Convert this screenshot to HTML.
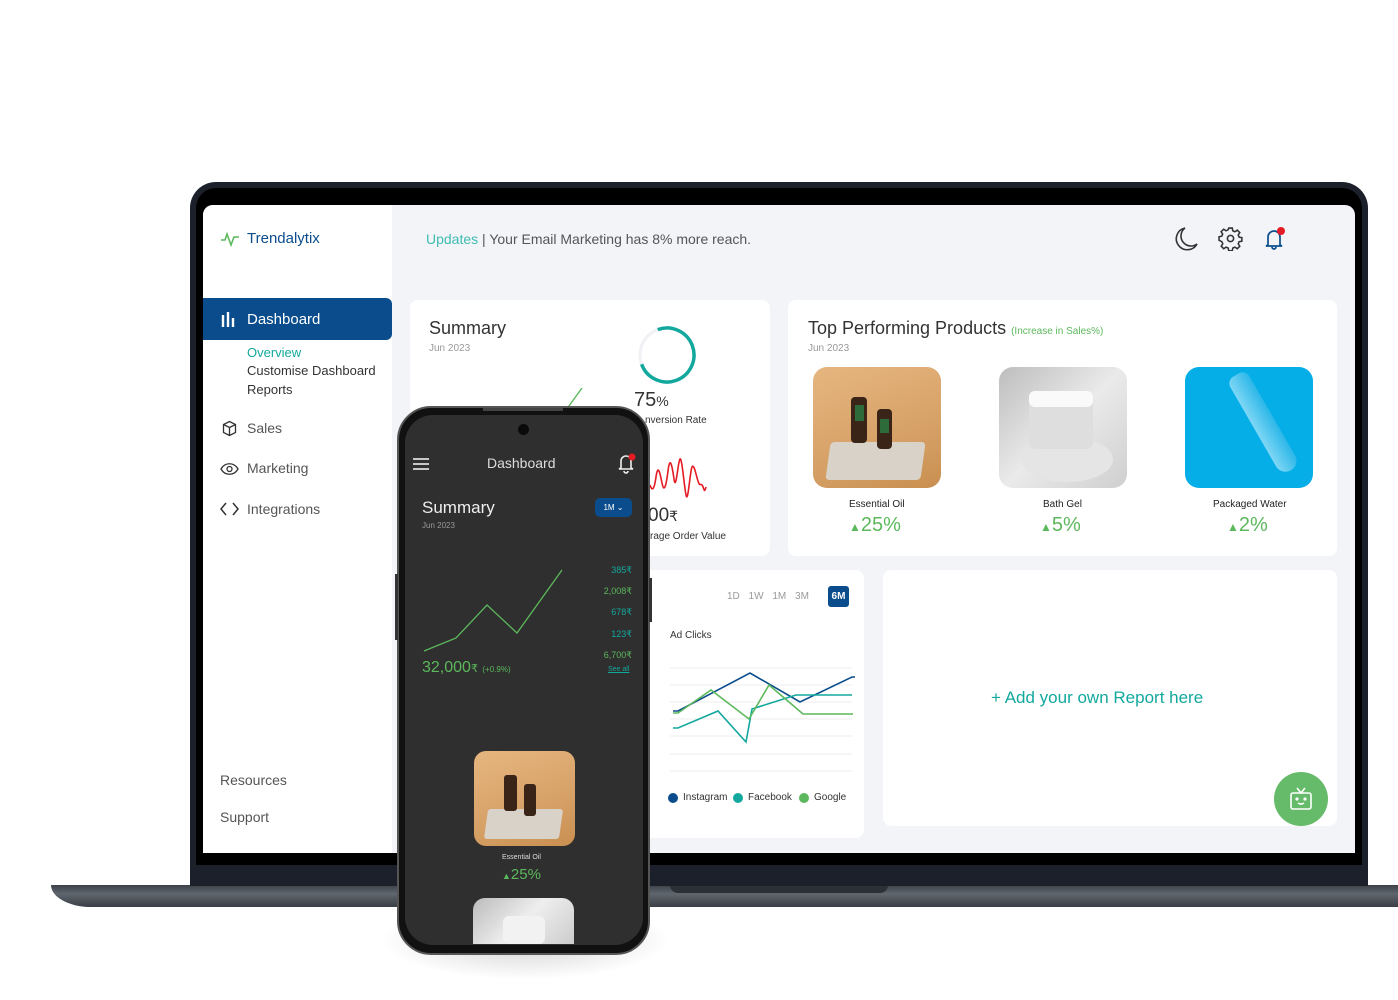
<!DOCTYPE html>
<html><head><meta charset="utf-8"><style>
*{margin:0;padding:0;box-sizing:border-box}
body{width:1398px;height:1000px;background:#fff;position:relative;overflow:hidden;font-family:"Liberation Sans",sans-serif;color:#333}
.a{position:absolute}
.card{position:absolute;background:#fff;border-radius:8px}
.t{position:absolute;white-space:nowrap}
</style></head><body>
<div class="a" style="left:51px;top:885px;width:1347px;height:22px;background:linear-gradient(#3c4148,#5f666d 40%,#3a3f46);border-radius:0 0 0 40px/0 0 0 22px"></div>
<div class="a" style="left:670px;top:885px;width:218px;height:8px;background:#2b3036;border-radius:0 0 8px 8px"></div>
<div class="a" style="left:190px;top:182px;width:1178px;height:704px;background:#1b202b;border-radius:26px 26px 0 0"></div>
<div class="a" style="left:196px;top:188px;width:1166px;height:677px;background:#000;border-radius:20px 20px 0 0"></div>
<div class="a" style="left:203px;top:205px;width:1152px;height:648px;background:#f3f4f8;border-radius:10px 10px 0 0;overflow:hidden">
  <div class="a" style="left:0;top:0;width:189px;height:648px;background:#fff"></div>
</div>
<svg class="a" style="left:220px;top:230px" width="20" height="18" viewBox="0 0 20 18"><path d="M1 10h4l2-6 4 11 3-8h5" fill="none" stroke="#5cb85c" stroke-width="1.6"/></svg>
<div class="t" style="left:247px;top:230px;font-size:15px;color:#0b4d8c">Trendalytix</div>
<div class="a" style="left:203px;top:298px;width:189px;height:42px;background:#0b4d8c;border-radius:0 6px 6px 0"></div>
<svg class="a" style="left:221px;top:311px" width="16" height="16"><path d="M2 4v12M7 1v15M12 7v9" stroke="#fff" stroke-width="2.4"/></svg>
<div class="t" style="left:247px;top:311px;font-size:15px;color:#fff">Dashboard</div>
<div class="t" style="left:247px;top:345px;font-size:13px;color:#13a89e">Overview</div>
<div class="t" style="left:247px;top:363px;font-size:13px;color:#333">Customise Dashboard</div>
<div class="t" style="left:247px;top:382px;font-size:13px;color:#333">Reports</div>
<svg class="a" style="left:221px;top:420px" width="17" height="17" viewBox="0 0 17 17" fill="none" stroke="#333" stroke-width="1.3"><path d="M8.5 1.5l6 3v8l-6 3-6-3v-8zM2.5 4.5l6 3 6-3M8.5 7.5v8"/></svg>
<div class="t" style="left:247px;top:420px;font-size:14px;color:#555">Sales</div>
<svg class="a" style="left:220px;top:462px" width="19" height="14" viewBox="0 0 19 14" fill="none" stroke="#333" stroke-width="1.3"><path d="M1 7c4-7 13-7 17 0-4 7-13 7-17 0z"/><circle cx="9.5" cy="7" r="2.5"/></svg>
<div class="t" style="left:247px;top:460px;font-size:14px;color:#555">Marketing</div>
<svg class="a" style="left:220px;top:502px" width="19" height="14" viewBox="0 0 19 14" fill="none" stroke="#333" stroke-width="1.5"><path d="M6 1L1 7l5 6M13 1l5 6-5 6"/></svg>
<div class="t" style="left:247px;top:501px;font-size:14px;color:#555">Integrations</div>
<div class="t" style="left:220px;top:772px;font-size:14px;color:#555">Resources</div>
<div class="t" style="left:220px;top:809px;font-size:14px;color:#555">Support</div>
<div class="t" style="left:426px;top:231px;font-size:14px;color:#555"><span style="color:#3fbcb3">Updates</span> | Your Email Marketing has 8% more reach.</div>
<svg class="a" style="left:1175px;top:226px" width="24" height="26" viewBox="0 0 24 26" fill="none" stroke="#333" stroke-width="1.6"><path d="M10 2a11 11 0 1 0 12 16A10 10 0 0 1 10 2z"/></svg>
<svg class="a" style="left:1218px;top:226px" width="25" height="25" viewBox="0 0 24 24" fill="none" stroke="#333" stroke-width="1.5"><circle cx="12" cy="12" r="3"/><path d="M10.3 2h3.4l.5 2.6 2 .9 2.3-1.5 2.4 2.4-1.5 2.3.9 2 2.6.5v3.4l-2.6.5-.9 2 1.5 2.3-2.4 2.4-2.3-1.5-2 .9-.5 2.6h-3.4l-.5-2.6-2-.9-2.3 1.5-2.4-2.4 1.5-2.3-.9-2L1 13.7v-3.4l2.6-.5.9-2L3 5.5l2.4-2.4 2.3 1.5 2-.9z"/></svg>
<svg class="a" style="left:1262px;top:226px" width="26" height="26" viewBox="0 0 26 26" fill="none" stroke="#0b4d8c" stroke-width="1.7"><path d="M6 19V11a6 6 0 0 1 12 0v8l2 1H4zM10 21a2 2 0 0 0 4 0"/><circle cx="19" cy="5" r="4" fill="#e51c23" stroke="none"/></svg>
<div class="card" style="left:410px;top:300px;width:360px;height:256px"></div>
<div class="t" style="left:429px;top:318px;font-size:18px;color:#333">Summary</div>
<div class="t" style="left:429px;top:343px;font-size:10px;color:#999">Jun 2023</div>
<svg class="a" style="left:636px;top:324px" width="62" height="62"><circle cx="31" cy="31" r="27" fill="none" stroke="#f0f1f4" stroke-width="3"/><path d="M31 4A27 27 0 1 1 4 31" fill="none" stroke="#13a89e" stroke-width="3.5" transform="rotate(-20 31 31)"/></svg>
<div class="t" style="left:634px;top:389px;font-size:20px;color:#333">75<span style="font-size:14px">%</span></div>
<div class="t" style="left:645px;top:415px;font-size:10px;color:#333">nversion Rate</div>
<svg class="a" style="left:560px;top:388px" width="30" height="22"><path d="M6 22L22 0" stroke="#5cb85c" stroke-width="1.4"/></svg>
<svg class="a" style="left:650px;top:455px" width="60" height="45"><path d="M0 30C2 36 4 36 6 22S10 18 12 28 16 32 18 16 22 10 24 24 28 6 30 4 34 30 36 40 40 16 42 12 46 20 48 26 50 28 52 30 54 40 56 32 58 34" fill="none" stroke="#e51c23" stroke-width="1.6"/></svg>
<div class="t" style="left:648px;top:505px;font-size:19px;color:#333">00<span style="font-size:14px">₹</span></div>
<div class="t" style="left:650px;top:531px;font-size:10px;color:#333">rage Order Value</div>
<div class="card" style="left:788px;top:300px;width:549px;height:256px"></div>
<div class="t" style="left:808px;top:318px;font-size:18px;color:#333">Top Performing Products <span style="font-size:10px;color:#5cb85c">(Increase in Sales%)</span></div>
<div class="t" style="left:808px;top:343px;font-size:10px;color:#999">Jun 2023</div>
<div class="a" style="left:813px;top:367px;width:128px;height:121px;border-radius:14px;background:linear-gradient(160deg,#e6b680,#d6a167 60%,#c98f50);overflow:hidden">
 <div class="a" style="left:15px;top:75px;width:95px;height:38px;background:#d8d2c8;transform:skewX(-8deg);border-radius:4px"></div>
 <div class="a" style="left:38px;top:30px;width:16px;height:46px;background:#3a2418;border-radius:4px"></div>
 <div class="a" style="left:42px;top:38px;width:9px;height:16px;background:#2e6b3a"></div>
 <div class="a" style="left:64px;top:42px;width:15px;height:40px;background:#3a2418;border-radius:4px"></div>
 <div class="a" style="left:67px;top:52px;width:9px;height:14px;background:#2e6b3a"></div>
</div>
<div class="a" style="left:999px;top:367px;width:128px;height:121px;border-radius:14px;background:linear-gradient(135deg,#bdbdbd,#eaeaea 50%,#cfcfcf);overflow:hidden">
 <div class="a" style="left:22px;top:70px;width:92px;height:45px;background:#e5e5e5;border-radius:50%"></div>
 <div class="a" style="left:30px;top:24px;width:64px;height:58px;background:#dedede;border-radius:6px"></div>
 <div class="a" style="left:30px;top:24px;width:64px;height:16px;background:#fafafa;border-radius:6px"></div>
</div>
<div class="a" style="left:1185px;top:367px;width:128px;height:121px;border-radius:14px;background:#06aee8;overflow:hidden">
 <div class="a" style="left:40px;top:8px;width:22px;height:110px;background:linear-gradient(90deg,#7fd7f5,#2bb7e8);border-radius:10px 10px 14px 14px;transform:rotate(-30deg);transform-origin:top"></div>
</div>
<div class="t" style="left:849px;top:499px;font-size:10px;color:#222">Essential Oil</div>
<div class="t" style="left:849px;top:514px;font-size:20px;color:#5cb85c"><span style="font-size:12px">▲</span>25%</div>
<div class="t" style="left:1043px;top:499px;font-size:10px;color:#222">Bath Gel</div>
<div class="t" style="left:1040px;top:514px;font-size:20px;color:#5cb85c"><span style="font-size:12px">▲</span>5%</div>
<div class="t" style="left:1213px;top:499px;font-size:10px;color:#222">Packaged Water</div>
<div class="t" style="left:1227px;top:514px;font-size:20px;color:#5cb85c"><span style="font-size:12px">▲</span>2%</div>
<div class="card" style="left:640px;top:570px;width:224px;height:268px"></div>
<div class="t" style="left:727px;top:591px;font-size:10px;color:#999;word-spacing:6px">1D 1W 1M 3M</div>
<div class="a" style="left:828px;top:586px;width:21px;height:21px;background:#0b4d8c;border-radius:3px;color:#fff;font-size:10px;font-weight:bold;text-align:center;line-height:21px">6M</div>
<div class="t" style="left:670px;top:630px;font-size:10px;color:#333">Ad Clicks</div>
<svg class="a" style="left:670px;top:660px" width="185" height="115"><g stroke="#eee"><path d="M0 8h182M0 25h182M0 42h182M0 59h182M0 76h182M0 94h182M0 111h182"/></g>
<path d="M3 51l5 0 72-38 50 29 52-25h4" fill="none" stroke="#0b4d8c" stroke-width="1.6"/>
<path d="M3 68l5 0 40-17 28 31 6-33 44-14h56" fill="none" stroke="#13a89e" stroke-width="1.6"/>
<path d="M3 53l5 0 33-23 38 29 20-34 34 29h50" fill="none" stroke="#5cb85c" stroke-width="1.6"/></svg>
<div class="a" style="left:668px;top:793px;width:10px;height:10px;border-radius:50%;background:#0b4d8c"></div>
<div class="t" style="left:683px;top:792px;font-size:10px;color:#333">Instagram</div>
<div class="a" style="left:733px;top:793px;width:10px;height:10px;border-radius:50%;background:#13a89e"></div>
<div class="t" style="left:748px;top:792px;font-size:10px;color:#333">Facebook</div>
<div class="a" style="left:799px;top:793px;width:10px;height:10px;border-radius:50%;background:#5cb85c"></div>
<div class="t" style="left:814px;top:792px;font-size:10px;color:#333">Google</div>
<div class="card" style="left:883px;top:570px;width:454px;height:256px"></div>
<div class="t" style="left:991px;top:688px;font-size:17px;color:#13a89e">+ Add your own Report here</div>
<div class="a" style="left:1274px;top:772px;width:54px;height:54px;background:#66bb6a;border-radius:50%"></div>
<svg class="a" style="left:1288px;top:785px" width="26" height="26" viewBox="0 0 26 26" fill="none" stroke="#fff" stroke-width="1.6"><rect x="3" y="8" width="20" height="16" rx="2"/><path d="M9 3l4 5 4-5"/><circle cx="9" cy="14" r=".8" fill="#fff"/><circle cx="17" cy="14" r=".8" fill="#fff"/><path d="M10 18q3 2 6 0"/></svg>
<div class="a" style="left:380px;top:900px;width:290px;height:80px;background:radial-gradient(ellipse at center,rgba(0,0,0,.18),rgba(0,0,0,0) 70%)"></div>
<div class="a" style="left:397px;top:406px;width:253px;height:549px;background:#111;border-radius:34px;border:2px solid #555"></div>
<div class="a" style="left:405px;top:415px;width:238px;height:530px;background:#2f2f2f;border-radius:28px;overflow:hidden">
 <div class="a" style="left:113px;top:9px;width:11px;height:11px;background:#0a0a0a;border-radius:50%"></div>
</div>
<div class="a" style="left:483px;top:408px;width:80px;height:3px;background:#444"></div>
<div class="a" style="left:395px;top:574px;width:3px;height:66px;background:#333"></div>
<div class="a" style="left:649px;top:578px;width:3px;height:44px;background:#333"></div>
<svg class="a" style="left:412px;top:457px" width="18" height="14"><path d="M1 2h16M1 7h16M1 12h16" stroke="#ddd" stroke-width="1.8"/></svg>
<div class="t" style="left:487px;top:455px;font-size:14px;color:#ddd">Dashboard</div>
<svg class="a" style="left:617px;top:452px" width="20" height="22" viewBox="0 0 20 22" fill="none" stroke="#eee" stroke-width="1.6"><path d="M4 16V9a5 5 0 0 1 10 0v7l2 1H2zM7 19a2 2 0 0 0 4 0"/><circle cx="15" cy="5" r="3.5" fill="#e51c23" stroke="none"/></svg>
<div class="t" style="left:422px;top:498px;font-size:17px;color:#eee">Summary</div>
<div class="t" style="left:422px;top:521px;font-size:8px;color:#999">Jun 2023</div>
<div class="a" style="left:595px;top:498px;width:37px;height:19px;background:#0b4d8c;border-radius:5px;color:#fff;font-size:8px;line-height:19px;text-align:center">1M ⌄</div>
<svg class="a" style="left:420px;top:560px" width="150" height="95"><path d="M4 91l32-13 31-33 30 28 45-63" fill="none" stroke="#5cb85c" stroke-width="1.3"/></svg>
<div class="a" style="left:590px;top:560px;width:42px;text-align:right;font-size:9px;line-height:21.2px;color:#13a89e">385₹<br><span style="color:#5cb85c">2,008₹</span><br>678₹<br>123₹<br><span style="color:#5cb85c">6,700₹</span></div>
<div class="t" style="left:608px;top:666px;font-size:7px;color:#13a89e;text-decoration:underline">See all</div>
<div class="t" style="left:422px;top:659px;font-size:16px;color:#5cb85c">32,000<span style="font-size:11px">₹</span> <span style="font-size:8px">(+0.9%)</span></div>
<div class="a" style="left:474px;top:751px;width:101px;height:95px;border-radius:12px;background:linear-gradient(160deg,#e6b680,#d6a167 60%,#c98f50);overflow:hidden">
 <div class="a" style="left:12px;top:58px;width:75px;height:30px;background:#d8d2c8;transform:skewX(-8deg);border-radius:3px"></div>
 <div class="a" style="left:30px;top:24px;width:13px;height:36px;background:#3a2418;border-radius:3px"></div>
 <div class="a" style="left:50px;top:33px;width:12px;height:32px;background:#3a2418;border-radius:3px"></div>
</div>
<div class="t" style="left:502px;top:854px;font-size:7px;color:#ddd">Essential Oil</div>
<div class="t" style="left:502px;top:866px;font-size:15px;color:#5cb85c"><span style="font-size:9px">▲</span>25%</div>
<div class="a" style="left:473px;top:898px;width:101px;height:46px;border-radius:12px 12px 0 0;background:linear-gradient(135deg,#bbb,#eee 50%,#ccc)"><div class="a" style="left:30px;top:18px;width:42px;height:28px;background:#f2f2f2;border-radius:6px"></div></div>
</body></html>
